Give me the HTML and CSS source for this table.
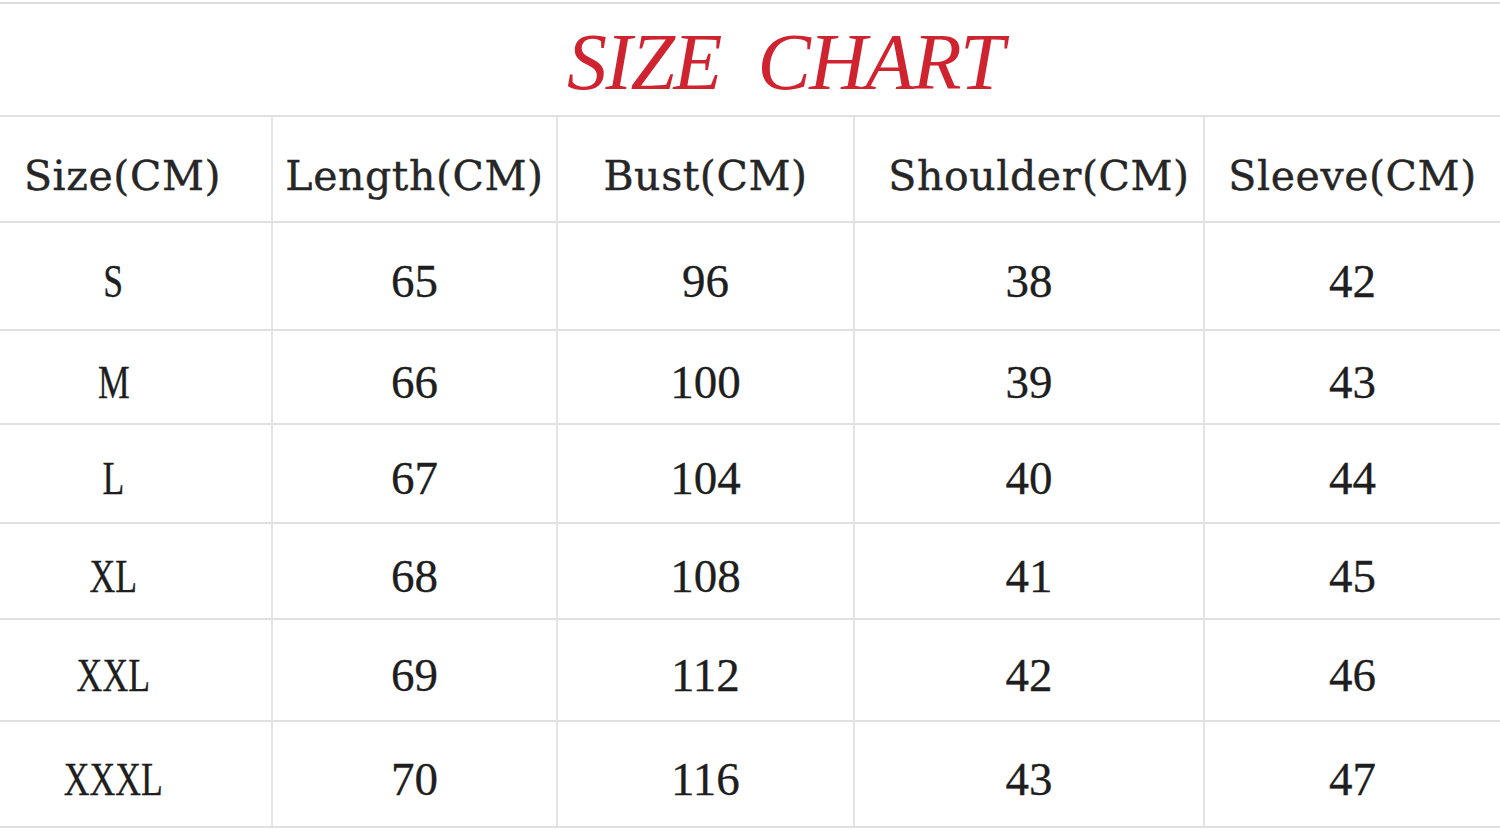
FILE: index.html
```html
<!DOCTYPE html>
<html lang="en">
<head>
<meta charset="utf-8">
<title>Size Chart</title>
<link rel="stylesheet" href="styles.css">
</head>
<body>
<div class="chart">
  <div class="title-row"><h1 class="title">SIZE&nbsp; CHART</h1></div>
  <div class="grid">
    <div class="cell head first">Size(CM)</div>
    <div class="cell head">Length(CM)</div>
    <div class="cell head">Bust(CM)</div>
    <div class="cell head shoulder">Shoulder(CM)</div>
    <div class="cell head">Sleeve(CM)</div>

    <div class="cell first"><span class="lbl">S</span></div><div class="cell">65</div><div class="cell">96</div><div class="cell">38</div><div class="cell">42</div>
    <div class="cell first"><span class="lbl">M</span></div><div class="cell">66</div><div class="cell">100</div><div class="cell">39</div><div class="cell">43</div>
    <div class="cell first"><span class="lbl">L</span></div><div class="cell">67</div><div class="cell">104</div><div class="cell">40</div><div class="cell">44</div>
    <div class="cell first"><span class="lbl">XL</span></div><div class="cell">68</div><div class="cell">108</div><div class="cell">41</div><div class="cell">45</div>
    <div class="cell first"><span class="lbl">XXL</span></div><div class="cell">69</div><div class="cell">112</div><div class="cell">42</div><div class="cell">46</div>
    <div class="cell first"><span class="lbl">XXXL</span></div><div class="cell">70</div><div class="cell">116</div><div class="cell">43</div><div class="cell">47</div>
  </div>
</div>
</body>
</html>
```
FILE: styles.css
```css
html, body {
  margin: 0;
  padding: 0;
  background: #ffffff;
}
.chart {
  width: 1500px;
  height: 831px;
  overflow: hidden;
  background: #ffffff;
}
.title-row {
  margin-top: 2px;
  border-top: 2px solid #dcdcdc;
  border-bottom: 2px solid #e0e0e0;
  box-sizing: border-box;
  height: 115px;
  display: flex;
  justify-content: center;
  align-items: flex-start;
}
.title {
  margin: 0;
  padding-top: 13px;
  padding-left: 70px;
  font-family: "Liberation Serif", "Times New Roman", serif;
  font-style: italic;
  font-weight: normal;
  font-size: 80px;
  line-height: 90px;
  color: #cf2430;
  letter-spacing: -1.6px;
}
.grid {
  display: grid;
  grid-template-columns: 271px 285px 297px 350px 297px;
  grid-template-rows: 106px 108px 94px 99px 96px 102px 106px;
}
.cell {
  display: flex;
  align-items: center;
  justify-content: center;
  box-sizing: border-box;
  border-bottom: 2px solid #e0e0e0;
  border-left: 2px solid #e4e4e4;
  padding-top: 9px;
  font-family: "Liberation Serif", "Times New Roman", serif;
  font-size: 47px;
  color: #1e1e1e;
  -webkit-text-stroke: 0.3px #1e1e1e;
}
.cell.first {
  border-left: none;
  padding-right: 44px;
}
.lbl {
  display: inline-block;
  transform: scaleX(0.76);
}
.cell.head {
  font-family: "DejaVu Serif", "Liberation Serif", serif;
  font-size: 41px;
  letter-spacing: 0.6px;
  color: #262626;
  -webkit-text-stroke: 0.4px #262626;
  padding-top: 14px;
}
.cell.head.first {
  padding-right: 26px;
}
.cell.head.shoulder {
  padding-left: 20px;
}
```
